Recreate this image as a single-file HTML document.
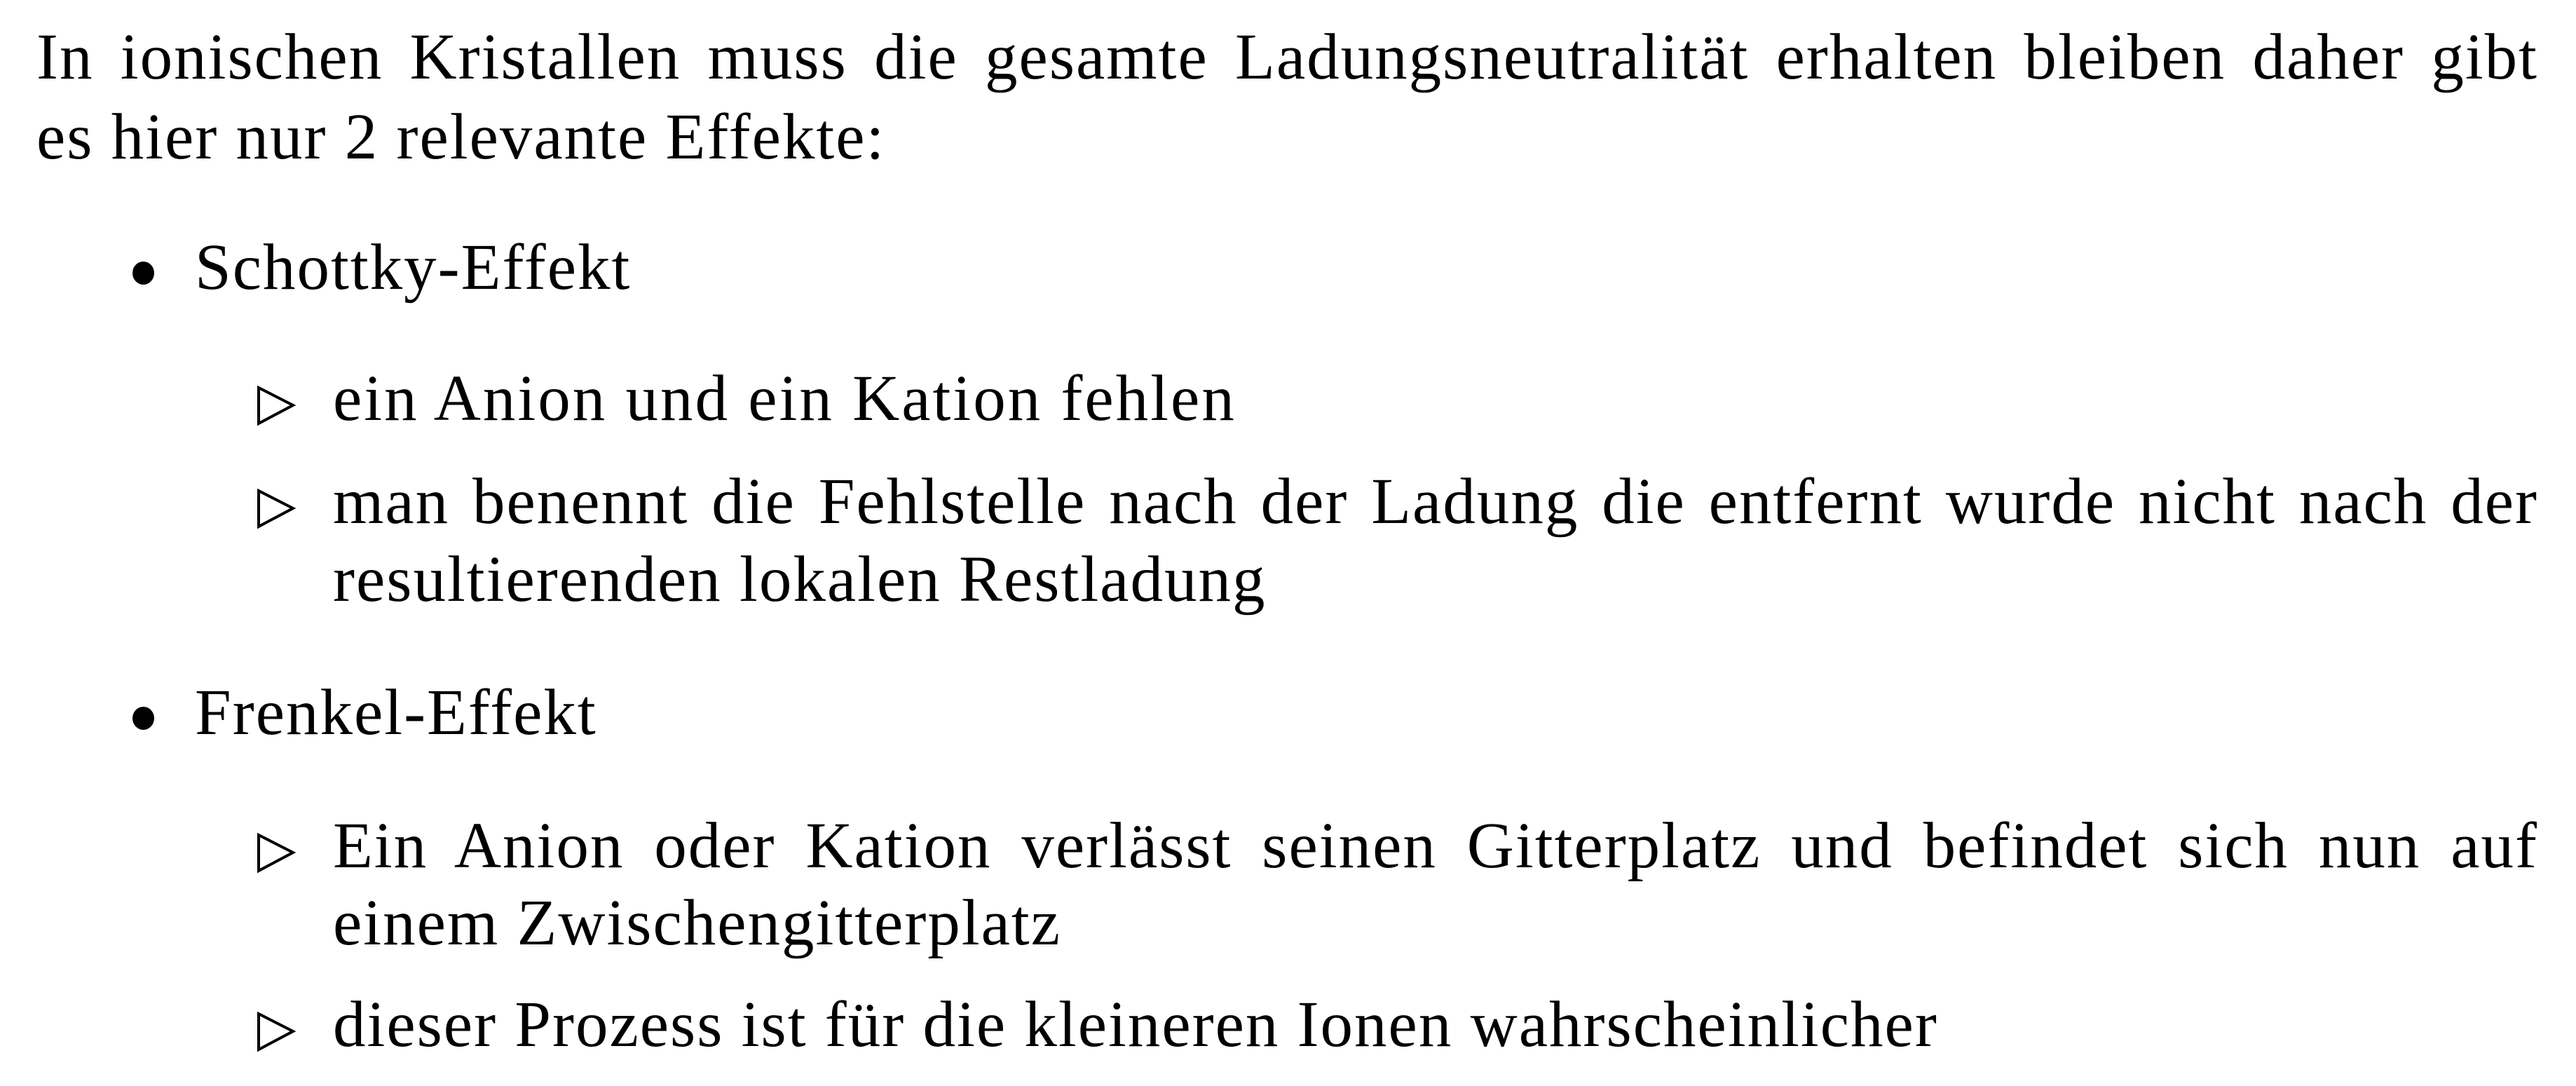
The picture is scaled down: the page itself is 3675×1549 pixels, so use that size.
<!DOCTYPE html>
<html><head><meta charset="utf-8"><style>
html,body{margin:0;padding:0;background:#fff;}
body{width:3675px;height:1549px;position:relative;overflow:hidden;font-family:"Liberation Serif",serif;font-size:93px;line-height:112px;color:#000;letter-spacing:2px;}
.t{position:absolute;white-space:nowrap;}
.j{position:absolute;text-align:justify;text-align-last:justify;white-space:normal;}
.b{position:absolute;width:31px;height:33px;border-radius:50%;background:#000;}
svg{position:absolute;}
</style></head><body>
<div class="j" style="left:52px;top:26px;width:3569px;">In ionischen Kristallen muss die gesamte Ladungsneutralität erhalten bleiben daher gibt</div>
<div class="t" style="left:52px;top:140px;">es hier nur 2 relevante Effekte:</div>

<div class="b" style="left:189px;top:373px;"></div>
<div class="t" style="left:278px;top:326px;">Schottky-Effekt</div>

<svg style="left:366px;top:550px" width="60" height="58"><path d="M3 3 L52 28 L3 54 Z" fill="none" stroke="#000" stroke-width="4"/></svg>
<div class="t" style="left:475px;top:513px;letter-spacing:3px;">ein Anion und ein Kation fehlen</div>

<svg style="left:366px;top:697px" width="60" height="58"><path d="M3 3 L52 28 L3 54 Z" fill="none" stroke="#000" stroke-width="4"/></svg>
<div class="j" style="left:475px;top:660px;width:3146px;">man benennt die Fehlstelle nach der Ladung die entfernt wurde nicht nach der</div>
<div class="t" style="left:475px;top:771px;">resultierenden lokalen Restladung</div>

<div class="b" style="left:189px;top:1008px;"></div>
<div class="t" style="left:278px;top:961px;">Frenkel-Effekt</div>

<svg style="left:366px;top:1188px" width="60" height="58"><path d="M3 3 L52 28 L3 54 Z" fill="none" stroke="#000" stroke-width="4"/></svg>
<div class="j" style="left:475px;top:1151px;width:3146px;">Ein Anion oder Kation verlässt seinen Gitterplatz und befindet sich nun auf</div>
<div class="t" style="left:475px;top:1261px;">einem Zwischengitterplatz</div>

<svg style="left:366px;top:1443px" width="60" height="58"><path d="M3 3 L52 28 L3 54 Z" fill="none" stroke="#000" stroke-width="4"/></svg>
<div class="t" style="left:475px;top:1406px;">dieser Prozess ist für die kleineren Ionen wahrscheinlicher</div>
</body></html>
